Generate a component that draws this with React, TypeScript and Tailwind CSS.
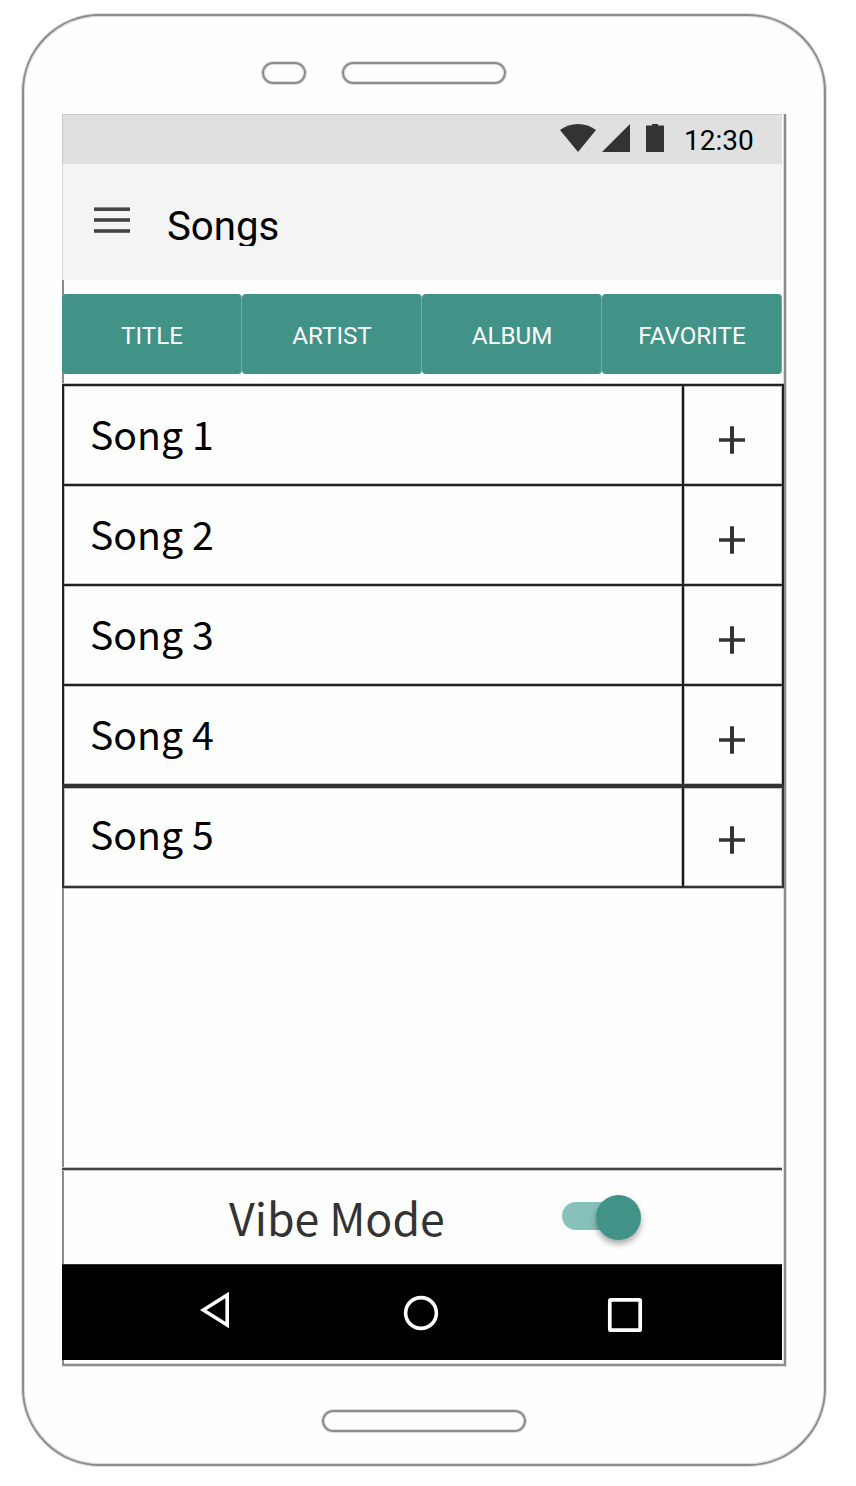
const tabs = ["TITLE", "ARTIST", "ALBUM", "FAVORITE"];
const songs = ["Song 1", "Song 2", "Song 3", "Song 4", "Song 5"];

const outline = "border-2 border-[#8c8c8c] shadow-[0_0_0_1px_#dedede,inset_0_0_0_1px_#dedede]";

function StatusBar() {
  return (
    <div className="flex h-[50px] w-[720px] items-start border-t border-l border-[#c9cbca] bg-[#e0e0e0] pl-[497px]">
      <svg className="mt-[9px] h-7 w-[36px] shrink-0" viewBox="0 0 36 28" fill="#333333">
        <path d="M0 6Q8 0 18 0T36 6L18 28Z" />
      </svg>
      <svg className="mt-[9px] ml-[6px] h-7 w-7 shrink-0" viewBox="0 0 28 28" fill="#333333">
        <path d="M28 0V28H0Z" />
      </svg>
      <svg className="mt-[9px] ml-4 h-7 w-[18px] shrink-0" viewBox="0 0 18 28" fill="#333333">
        <path d="M6 0H12V1.6H18V28H0V1.6H6Z" />
      </svg>
      <span className="ml-5 pt-[9px] text-[28px] leading-[34px] whitespace-nowrap text-black">12:30</span>
    </div>
  );
}

function AppBar() {
  return (
    <header className="flex h-[116px] w-[720px] items-start border-l border-[#d6d6d6] bg-[#f4f4f4] pl-[31px]">
      <svg className="mt-[43px] h-[27px] w-9 shrink-0" viewBox="0 0 36 27" fill="#444444">
        <rect y="0.4" width="36" height="3.6" />
        <rect y="11.2" width="36" height="3.6" />
        <rect y="22.2" width="36" height="3.6" />
      </svg>
      <h1 className="mt-[38px] ml-9 h-[44px] overflow-hidden pt-px pr-1 pl-px text-[40.2px] leading-[48px] text-black">
        Songs
      </h1>
    </header>
  );
}

function Tabs() {
  return (
    <nav className="flex border-l-2 border-[#8c8c8c] pt-[14px] pb-[10px]">
      <div className="-ml-[2px] flex w-[720px]">
        {tabs.map((tab) => (
          <button
            key={tab}
            className="h-20 w-[180px] rounded-[4px] border-r border-[#6daaa1] bg-[#419388] pt-[5px] pl-px text-[24.2px] text-white"
          >
            {tab}
          </button>
        ))}
      </div>
    </nav>
  );
}

function SongRow({ title, last }: { title: string; last: boolean }) {
  return (
    <li
      className={
        last
          ? "flex h-[104px] border-x-2 border-t-4 border-b-2 border-[#333333]"
          : "flex h-[100px] border-x-2 border-t-2 border-[#222222]"
      }
    >
      <span
        className={
          "flex-1 pl-[26px] font-['Noto_Sans_CJK_SC',sans-serif] text-[39.2px] leading-[60px] text-black shadow-[inset_0_0_0_1px_#bfc2c0] " +
          (last ? "pt-[15px]" : "pt-[17px]")
        }
      >
        {title}
      </span>
      <button
        aria-label={"Add " + title}
        className={
          "flex w-[100px] items-start border-l-2 border-[#1a1a1a] pl-[35px] shadow-[inset_0_0_0_1px_#bfc2c0] " +
          (last ? "pt-[38px]" : "pt-[40px]")
        }
      >
        <svg className="h-7 w-[26px]" viewBox="0 0 26 28" fill="#333333">
          <path d="M11 0.2H15V12.2H26V15.8H15V27.8H11V15.8H0V12.2H11Z" />
        </svg>
      </button>
    </li>
  );
}

function VibeMode() {
  return (
    <div className="flex h-[96px] w-[720px] border-t-2 border-[#444444] pl-[167px] shadow-[0_-1px_0_#c4c4c4,inset_0_1px_0_#c4c4c4,inset_2px_0_0_#8c8c8c]">
      <span className="w-[333px] pt-[14px] font-['Noto_Sans_CJK_SC',sans-serif] text-[44.6px] leading-[66px] whitespace-nowrap text-[#333333]">
        Vibe Mode
      </span>
      <div className="mt-[32px] h-7 w-[76px] rounded-full bg-[#88c1ba] pl-[34px]">
        <div className="-mt-[7px] h-[45px] w-[45px] rounded-full bg-[#419388] shadow-[0_4px_6px_rgba(0,0,0,0.35)]" />
      </div>
    </div>
  );
}

function SystemNav() {
  return (
    <div className="flex h-24 w-[720px] items-start border-t border-[#333333] bg-black pl-[138px]">
      <svg className="mt-[26px] h-[38px] w-[30px]" viewBox="0 0 30 38" fill="none" stroke="#fff" strokeWidth="3.6">
        <path d="M27.2 4V34L3.2 19Z" />
      </svg>
      <svg className="mt-[30px] ml-[173px] h-9 w-9" viewBox="0 0 36 36" fill="none" stroke="#fff" strokeWidth="3.6">
        <circle cx="18" cy="18" r="15.4" />
      </svg>
      <svg className="mt-[32px] ml-[168px] h-9 w-9" viewBox="0 0 36 36" fill="none" stroke="#fff" strokeWidth="3.7">
        <rect x="2.8" y="2.8" width="30.4" height="30.4" rx="1" />
      </svg>
    </div>
  );
}

export default function App() {
  return (
    <div className="h-[1486px] w-[856px] bg-white pt-[14px] pl-[22px] font-['Roboto',sans-serif]">
      <div className={"h-[1452px] w-[804px] rounded-[78px] bg-[#fefefe] " + outline}>
        <div className="flex h-[98px] gap-9 pt-[46px] pl-[238px]">
          <div className={"h-[22px] w-11 rounded-full " + outline} />
          <div className={"h-[22px] w-[164px] rounded-full " + outline} />
        </div>
        <main className="ml-[38px] flex h-[1252px] w-[724px] flex-col border-r-2 border-b-2 border-[#8c8c8c] shadow-[1px_1px_0_#dedede,inset_-1px_-1px_0_#dedede]">
          <StatusBar />
          <AppBar />
          <Tabs />
          <ul className="shadow-[0_-1px_0_#bfc2c0,0_1px_0_#bfc2c0]">
            {songs.map((song, i) => (
              <SongRow key={song} title={song} last={i === songs.length - 1} />
            ))}
          </ul>
          <div className="h-[280px] border-l-2 border-[#8c8c8c]" />
          <VibeMode />
          <SystemNav />
          <div className="h-1 border-l-2 border-[#8c8c8c]" />
        </main>
        <div className="pt-[44px] pl-[298px]">
          <div className={"h-[22px] w-[204px] rounded-full " + outline} />
        </div>
      </div>
    </div>
  );
}
